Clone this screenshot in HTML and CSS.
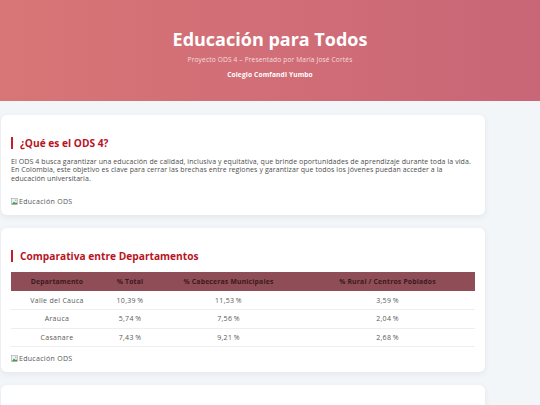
FILE: index.html
```html
<!DOCTYPE html>
<html lang="es">
<head>
    <meta charset="UTF-8" />
    <meta name="viewport" content="width=device-width, initial-scale=1.0" />
    <title>Educación para Todos</title>
    <link rel="stylesheet" href="styles.css">
</head>
<body>
    <header class="hero">
        <h1>Educación para Todos</h1>
        <p class="subtitle">Proyecto ODS 4 – Presentado por María José Cortés</p>
        <p class="school">Colegio Comfandi Yumbo</p>
    </header>

    <main class="content">
        <section class="card">
            <h2>¿Qué es el ODS 4?</h2>
            <p>El ODS 4 busca garantizar una educación de calidad, inclusiva y equitativa, que brinde oportunidades de aprendizaje durante toda la vida. En Colombia, este objetivo es clave para cerrar las brechas entre regiones y garantizar que todos los jóvenes puedan acceder a la educación universitaria.</p>
            <div class="pic">
                <!-- placeholder shown while the photo is missing -->
                <svg width="7" height="7" viewBox="0 0 7 7"><rect x="0.5" y="0.5" width="6" height="6" fill="#eef2f6" stroke="#9aa4ad" stroke-width="0.6"/><path d="M0.8 6.2 L3 3.6 L4.4 5 L5.2 4.2 L6.2 5.4 L6.2 6.2 Z" fill="#4f9a4a"/><circle cx="4.8" cy="2.2" r="0.8" fill="#8bb4d8"/></svg>
                <span>Educación ODS</span>
            </div>
        </section>

        <section class="card">
            <h2 class="table-title">Comparativa entre Departamentos</h2>
            <table class="compare">
                <thead>
                    <tr>
                        <th class="c1">Departamento</th>
                        <th class="c2">% Total</th>
                        <th class="c3">% Cabeceras Municipales</th>
                        <th class="c4">% Rural / Centros Poblados</th>
                    </tr>
                </thead>
                <tbody>
                    <tr><td>Valle del Cauca</td><td>10,39&thinsp;%</td><td>11,53&thinsp;%</td><td>3,59&thinsp;%</td></tr>
                    <tr><td>Arauca</td><td>5,74&thinsp;%</td><td>7,56&thinsp;%</td><td>2,04&thinsp;%</td></tr>
                    <tr><td>Casanare</td><td>7,43&thinsp;%</td><td>9,21&thinsp;%</td><td>2,68&thinsp;%</td></tr>
                </tbody>
            </table>
            <div class="pic">
                <svg width="7" height="7" viewBox="0 0 7 7"><rect x="0.5" y="0.5" width="6" height="6" fill="#eef2f6" stroke="#9aa4ad" stroke-width="0.6"/><path d="M0.8 6.2 L3 3.6 L4.4 5 L5.2 4.2 L6.2 5.4 L6.2 6.2 Z" fill="#4f9a4a"/><circle cx="4.8" cy="2.2" r="0.8" fill="#8bb4d8"/></svg>
                <span>Educación ODS</span>
            </div>
        </section>

        <section class="card">
            <h2>Retos para el acceso</h2>
            <p>La falta de recursos y la distancia a los centros educativos siguen siendo barreras para muchos jóvenes.</p>
        </section>
    </main>
</body>
</html>
```

FILE: styles.css
```css
* {
    box-sizing: border-box;
}
body {
    margin: 0;
    background-color: #f3f6f9;
    font-family: 'Open Sans', 'DejaVu Sans', sans-serif;
    color: #4a4a4a;
}
.hero {
    height: 101px;
    padding-top: 28px;
    text-align: center;
    color: #ffffff;
    background: linear-gradient(90deg, #d87576 0%, #c96677 100%);
}
.hero h1 {
    margin: 0;
    font-size: 18px;
    line-height: 22px;
    font-weight: 700;
}
.subtitle {
    margin: 5px 0 0;
    font-size: 6.6px;
    line-height: 9px;
    letter-spacing: 0.15px;
    color: #f6dede;
}
.school {
    margin: 6px 0 0;
    font-size: 6.6px;
    line-height: 9px;
    letter-spacing: 0.15px;
    font-weight: 700;
}
.content {
    padding: 14px 55px 0 1px;
    display: flex;
    flex-direction: column;
    gap: 13px;
}
.card {
    background-color: #ffffff;
    border-radius: 6px;
    padding: 22px 10px 10px;
    box-shadow: 0 2px 6px rgba(30, 40, 60, 0.08);
}
.card h2 {
    margin: 0 0 8.5px;
    padding-left: 7px;
    border-left: 2px solid #c0202a;
    font-size: 10.2px;
    line-height: 12px;
    font-weight: 700;
    color: #b8141f;
}
.card .table-title {
    margin-bottom: 10px;
}
.card p {
    margin: 0 0 14px;
    font-size: 7px;
    line-height: 8.5px;
    letter-spacing: 0.09px;
    color: #4d4d4d;
}
.pic {
    display: flex;
    align-items: center;
    gap: 1px;
    height: 8px;
    font-size: 7px;
    letter-spacing: 0.3px;
    color: #555555;
}
.compare {
    width: 100%;
    border-collapse: collapse;
    margin-bottom: 7px;
    font-size: 6.8px;
}
.compare th {
    height: 19px;
    background-color: #8f4d57;
    color: #3a1a1f;
    font-weight: 700;
    letter-spacing: 0.2px;
}
.compare td {
    height: 18.5px;
    text-align: center;
    color: #5a5a5a;
    font-size: 7px;
    letter-spacing: 0.3px;
    border-bottom: 1px solid #eeeeee;
}
.c1 { width: 92px; }
.c2 { width: 54px; }
.c3 { width: 143px; }
```
